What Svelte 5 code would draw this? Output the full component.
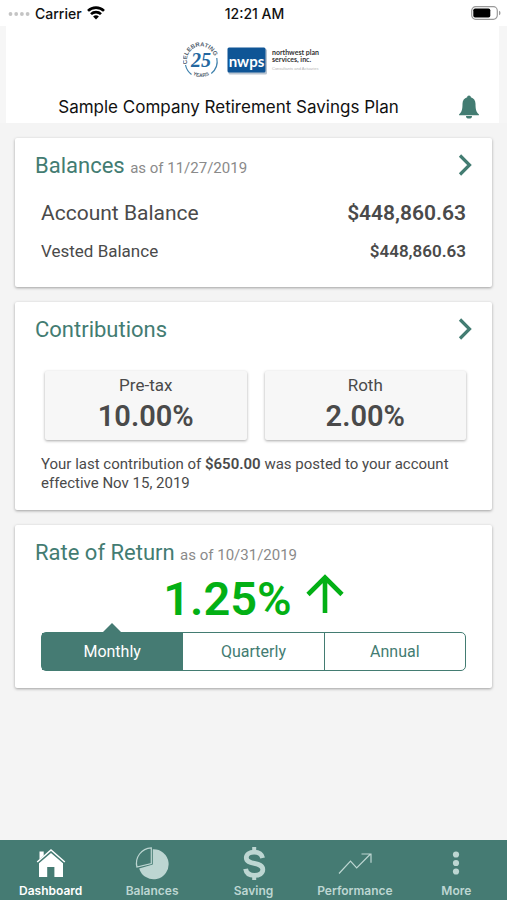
<script lang="ts">
	type Tab = { id: string; label: string };

	const balances = {
		asOf: '11/27/2019',
		account: '$448,860.63',
		vested: '$448,860.63'
	};

	const contributions = [
		{ label: 'Pre-tax', value: '10.00%' },
		{ label: 'Roth', value: '2.00%' }
	];

	const periods = ['Monthly', 'Quarterly', 'Annual'];

	const tabs: Tab[] = [
		{ id: 'dashboard', label: 'Dashboard' },
		{ id: 'balances', label: 'Balances' },
		{ id: 'saving', label: 'Saving' },
		{ id: 'performance', label: 'Performance' },
		{ id: 'more', label: 'More' }
	];

	let period = $state('Monthly');
	let activeTab = $state('dashboard');
</script>

{#snippet chevron()}
	<svg width="14" height="22" viewBox="0 0 14 22" aria-hidden="true">
		<path d="M2 1.5l9.500 9.500-9.500 9.500" fill="none" stroke="currentColor" stroke-width="3.200" />
	</svg>
{/snippet}

<div class="app">
	<header>
		<div class="status-bar">
			<div class="carrier">
				<svg width="22" height="6" viewBox="0 0 22 6" fill="#c4c4c4" aria-hidden="true">
					<circle cx="2.5" cy="4" r="1.9" />
					<circle cx="8.2" cy="4" r="1.9" />
					<circle cx="13.9" cy="4" r="1.9" />
					<circle cx="19.6" cy="4" r="1.9" />
				</svg>
				<span>Carrier</span>
				<svg width="18" height="14" viewBox="0 0 18 14" aria-hidden="true">
					<g fill="none" stroke="#000" stroke-width="2.6">
						<path d="M1 4.9a11.4 11.4 0 0 1 16 0" />
						<path d="M4 8.2a7.1 7.1 0 0 1 10 0" />
					</g>
					<path d="M9 13.6l-2.9-3a4.1 4.1 0 0 1 5.8 0z" />
				</svg>
			</div>
			<span class="clock">12:21 AM</span>
			<svg class="battery" width="30" height="14" viewBox="0 0 30 14" aria-hidden="true">
				<rect x="0.7" y="0.7" width="25.6" height="12.6" rx="4" fill="none" stroke="#999" stroke-width="1.2" />
				<rect x="2.3" y="2.4" width="17" height="9.2" rx="1.8" />
				<path d="M28 4.8q1.5 .5 1.5 2.2T28 9.2z" fill="#999" />
			</svg>
		</div>

		<div class="masthead">
			<svg class="logo" width="140" height="40" viewBox="0 0 140 40" role="img" aria-label="nwps, northwest plan services, inc.">
				<defs>
					<path id="ring-top" d="M4.300 24A13.900 13.900 0 1 1 31.500 22" />
					<path id="ring-bottom" d="M6.500 32.5A17 17 0 0 0 29.500 32.500" />
				</defs>
				<g class="ring-text">
					<text><textPath href="#ring-top">CELEBRATING</textPath></text>
					<text class="small-ring" text-anchor="middle"><textPath href="#ring-bottom" startOffset="50%">YEARS</textPath></text>
				</g>
				<g fill="none" stroke="#3f82ad" stroke-width="1.200">
					<path d="M2.500 25a16 16 0 0 0 6 9.500" />
					<path d="M33.800 18a16 16 0 0 1-5.500 15.500" />
				</g>
				<text class="years" x="18" y="27" text-anchor="middle">25</text>
				<rect x="45.5" y="9" width="38.5" height="25.5" rx="1.5" fill="#b9c4d0" />
				<rect x="44.5" y="7.5" width="38" height="25" rx="1.5" fill="#0f5596" />
				<text class="nwps" x="63.500" y="26.500" text-anchor="middle">nwps</text>
				<text class="company" x="89" y="14.500">northwest plan</text>
				<text class="company" x="89" y="22">services, inc.</text>
				<text class="tagline" x="89" y="29.5">Consultants and Actuaries</text>
			</svg>
			<div class="plan-row">
				<h1>Sample Company Retirement Savings Plan</h1>
				<button class="bell" aria-label="Notifications">
					<svg width="20" height="24" viewBox="0 0 20 24" fill="currentColor" aria-hidden="true">
						<path d="M10 0.5c1.1 0 1.8.8 1.8 1.8 2.9.8 4.7 3.3 4.7 6.4 0 5.800 .7 8.300 3.400 10.600v.9H.1v-.9c2.700-2.300 3.400-4.800 3.400-10.600 0-3.100 1.800-5.600 4.700-6.400 0-1 .7-1.800 1.800-1.800z" />
						<path d="M7 21h6a3 2.600 0 0 1-6 0z" />
					</svg>
				</button>
			</div>
		</div>
	</header>

	<main>
		<section class="card">
			<div class="card-head">
				<h2>Balances <small>as of {balances.asOf}</small></h2>
				<button class="open" aria-label="Open balances">{@render chevron()}</button>
			</div>
			<div class="row primary">
				<span>Account Balance</span>
				<b>{balances.account}</b>
			</div>
			<div class="row">
				<span>Vested Balance</span>
				<b>{balances.vested}</b>
			</div>
		</section>

		<section class="card">
			<div class="card-head">
				<h2>Contributions</h2>
				<button class="open" aria-label="Open contributions">{@render chevron()}</button>
			</div>
			<div class="tiles">
				{#each contributions as item}
					<div class="tile">
						<span>{item.label}</span>
						<strong>{item.value}</strong>
					</div>
				{/each}
			</div>
			<p class="note">
				Your last contribution of <b>$650.00</b> was posted to your account effective Nov 15, 2019
			</p>
		</section>

		<section class="card">
			<div class="card-head">
				<h2>Rate of Return <small>as of 10/31/2019</small></h2>
			</div>
			<div class="rate">
				<span>1.25%</span>
				<svg width="38" height="48" viewBox="0 0 38 48" aria-hidden="true">
					<path d="M19 39V4M2 20.500L19 3.500l17 17" fill="none" stroke="currentColor" stroke-width="4.600" />
				</svg>
			</div>
			<div class="periods">
				{#each periods as name}
					<button class:selected={period === name} aria-pressed={period === name} onclick={() => (period = name)}>
						{name}
					</button>
				{/each}
			</div>
		</section>
	</main>

	<nav>
		{#each tabs as tab}
			<button class:active={activeTab === tab.id} onclick={() => (activeTab = tab.id)}>
				<svg width="36" height="36" viewBox="0 0 36 36" fill="currentColor" aria-hidden="true">
					{#if tab.id === 'dashboard'}
						<path d="M6.500 13.200V5.500h4.200v4z" />
						<path d="M18 7L6 17.200V31h8.200V21h7.200v10H30V17.200z" />
						<path d="M4.200 16L18 4l13.800 12" fill="none" stroke="currentColor" stroke-width="1.500" />
					{:else if tab.id === 'balances'}
						<path d="M18.800 3.300a15 15 0 1 1-13.600 19.100l13.600-3.800z" />
						<path d="M17.300 1.800v15.700L2.900 21A15.500 15.500 0 0 1 17.300 1.800z" fill="none" stroke="currentColor" stroke-width="1.200" />
					{:else if tab.id === 'saving'}
						<g fill="none" stroke="currentColor" stroke-width="4.800">
							<path d="M26.600 12c-.8-3.800-3.700-5.900-8.400-5.900-4.600 0-7.900 2.200-7.900 5.600 0 3.700 3.500 4.700 8 5.700 4.800 1.100 8.500 2.200 8.500 6.200 0 3.700-3.400 5.800-8.300 5.800-5 0-8.300-2.400-8.900-6.500" />
							<path d="M18.200 1v6M18.200 28.500v5.500" stroke-width="4" />
						</g>
					{:else if tab.id === 'performance'}
						<path d="M2 27.500l11.500-12.300 6.200 6.600L33.500 8M24.500 8h9.500v8.800" fill="none" stroke="currentColor" stroke-width="1.200" />
					{:else}
						<circle cx="18" cy="8.500" r="3.100" />
						<circle cx="18" cy="17" r="3.100" />
						<circle cx="18" cy="25.500" r="3.100" />
					{/if}
				</svg>
				<span>{tab.label}</span>
			</button>
		{/each}
	</nav>
</div>

<style>
	:global(body) {
		margin: 0;
		background: #f4f4f4;
	}

	.app {
		display: flex;
		flex-direction: column;
		min-height: 100vh;
		font-family: Roboto, 'Liberation Sans', sans-serif;
		color: #4a4a4a;
	}

	button {
		margin: 0;
		padding: 0;
		border: 0;
		background: none;
		font: inherit;
		color: inherit;
		cursor: pointer;
	}

	svg {
		display: block;
	}

	header {
		background: #fff;
		color: #111;
		font-family: Inter, Roboto, sans-serif;
	}

	.status-bar {
		display: grid;
		grid-template-columns: 1fr auto 1fr;
		align-items: center;
		height: 26px;
		padding: 0 6px 0 8px;
		font-size: 14px;
		font-weight: 500;
	}

	.carrier {
		display: flex;
		align-items: center;
		gap: 5px;
	}

	.battery {
		justify-self: end;
	}

	.masthead {
		display: flex;
		flex-direction: column;
		align-items: center;
		height: 97px;
		box-sizing: border-box;
		padding-top: 14px;
		border: solid #f6f6f6;
		border-width: 0 8px 0 6px;
	}

	.ring-text {
		font-family: 'Liberation Sans', sans-serif;
		font-size: 6px;
		font-weight: bold;
		fill: #52606e;
	}

	.small-ring {
		font-size: 5px;
	}

	.years {
		font-family: 'Liberation Serif', serif;
		font-size: 20px;
		font-style: italic;
		font-weight: bold;
		fill: #2467a0;
	}

	.nwps {
		font-family: Lato, sans-serif;
		font-size: 15px;
		font-weight: 700;
		fill: #fff;
	}

	.company {
		font-family: Lato, sans-serif;
		font-size: 7px;
		font-weight: 700;
		fill: #333;
	}

	.tagline {
		font-family: 'Liberation Sans', sans-serif;
		font-size: 4px;
		fill: #b5b5b5;
	}

	.plan-row {
		display: grid;
		grid-template-columns: 1fr auto 1fr;
		align-items: center;
		width: 100%;
		margin-top: 15px;
	}

	h1 {
		grid-column: 2;
		margin: 0 48px 0 0;
		font-size: 17px;
		line-height: 24px;
		font-weight: 400;
		white-space: nowrap;
	}

	.bell {
		justify-self: end;
		margin-right: 20px;
		color: #437c72;
	}

	main {
		flex: 1;
		display: flex;
		flex-direction: column;
		gap: 15px;
		padding: 15px;
	}

	.card {
		padding: 11px 20px 17px;
		background: #fff;
		border-radius: 2px;
		box-shadow: 0 1px 3px rgba(0, 0, 0, 0.35);
	}

	.card-head {
		display: flex;
		align-items: center;
		justify-content: space-between;
		height: 32px;
	}

	h2 {
		margin: 0;
		font-size: 22px;
		font-weight: 400;
		color: #437c72;
	}

	small {
		font-size: 15px;
		color: #8a8a8a;
	}

	.open {
		color: #437c72;
	}

	.row {
		display: flex;
		align-items: center;
		justify-content: space-between;
		height: 38px;
		padding: 0 6px;
		font-size: 17px;
	}

	.row.primary {
		height: 39px;
		margin-top: 12px;
		font-size: 21px;
	}

	b,
	strong {
		font-weight: 600;
	}

	.tiles {
		display: flex;
		gap: 18px;
		margin-top: 26px;
		padding: 0 6px 0 10px;
	}

	.tile {
		flex: 1;
		display: flex;
		flex-direction: column;
		align-items: center;
		padding: 1px 0 5px;
		background: #f7f7f7;
		border-radius: 2px;
		box-shadow: 0 1px 3px rgba(0, 0, 0, 0.35);
	}

	.tile span {
		font-size: 17px;
		line-height: 26px;
	}

	.tile strong {
		font-size: 29px;
		line-height: 37px;
	}

	.note {
		margin: 15px 6px 0;
		font-size: 15px;
		line-height: 19px;
	}

	.rate {
		display: flex;
		align-items: center;
		justify-content: center;
		gap: 14px;
		height: 60px;
		color: #03b015;
	}

	.rate span {
		font-size: 47px;
		font-weight: 600;
	}

	.periods {
		display: flex;
		margin: 4px 6px 0;
		border: 1px solid #437c72;
		border-radius: 5px;
	}

	.periods button {
		position: relative;
		flex: 1;
		height: 37px;
		font-size: 16px;
		color: #437c72;
	}

	.periods button + button {
		border-left: 1px solid #437c72;
	}

	.periods button.selected {
		background: #457b73;
		color: #fff;
	}

	/* pointer above the selected period */
	.periods button.selected::before {
		content: '';
		position: absolute;
		bottom: 100%;
		left: 50%;
		margin-left: -10px;
		border: solid transparent;
		border-width: 0 10px 10px;
		border-bottom-color: #457b73;
	}

	nav {
		position: sticky;
		bottom: 0;
		display: flex;
		background: #457b73;
		font-family: Inter, Roboto, sans-serif;
	}

	nav button {
		flex: 1;
		display: flex;
		flex-direction: column;
		align-items: center;
		padding-top: 6px;
		font-size: 12px;
		line-height: 18px;
		font-weight: 600;
		color: #bdd6d2;
	}

	nav button.active {
		color: #fff;
	}
</style>
